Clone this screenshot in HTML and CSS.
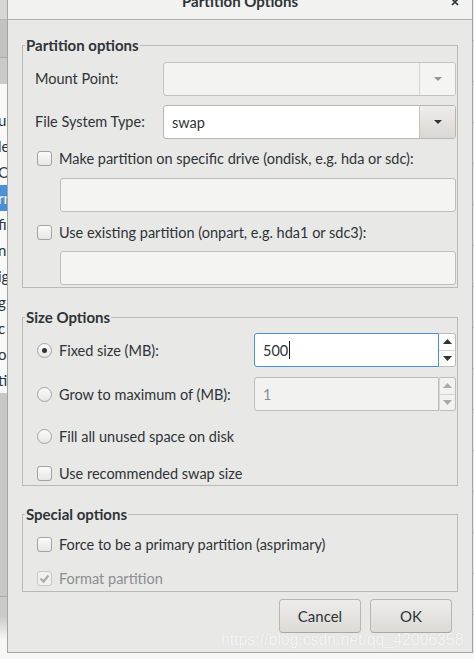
FILE: index.html
```html
<!DOCTYPE html>
<html>
<head>
<meta charset="utf-8">
<title>Partition Options</title>
<link rel="stylesheet" href="styles.css">
</head>
<body>
<div class="screen">
  <div class="bg-left">
    <div class="bl-a"></div>
    <div class="bl-b"></div>
    <div class="bl-c"></div>
    <div class="bl-list">
      <div class="bl-row"><span>ur</span></div>
      <div class="bl-row"><span>le</span></div>
      <div class="bl-row"><span>O</span></div>
      <div class="bl-row sel"><span>rn</span></div>
      <div class="bl-row"><span>fi</span></div>
      <div class="bl-row"><span>n</span></div>
      <div class="bl-row"><span>ig</span></div>
      <div class="bl-row"><span>g</span></div>
      <div class="bl-row"><span>c</span></div>
      <div class="bl-row"><span>or</span></div>
      <div class="bl-row"><span>tic</span></div>
    </div>
    <div class="bl-gray"></div>
    <div class="bl-gray2"></div>
    <div class="bl-fade"></div>
  </div>

  <div class="dialog">
    <div class="titlebar">
      <span class="title">Partition Options</span>
      <svg class="close" width="8" height="8" viewBox="0 0 8 8"><path d="M1 1l6 6M7 1L1 7" stroke="#2e3436" stroke-width="1.7" fill="none"/></svg>
    </div>

    <div class="dbody">
      <fieldset class="frame">
        <legend>Partition options</legend>
        <div class="fc fc1">
          <div class="grid-a">
            <span class="lbl">Mount Point:</span>
            <div class="combo disabled">
              <div class="combo-entry"></div>
              <div class="combo-btn"><svg width="8" height="4" viewBox="0 0 8 4"><path d="M0 0h8L4 4z" fill="#929595"/></svg></div>
            </div>
            <span class="lbl">File System Type:</span>
            <div class="combo">
              <div class="combo-entry">swap</div>
              <div class="combo-btn"><svg width="8" height="4" viewBox="0 0 8 4"><path d="M0 0h8L4 4z" fill="#2e3436"/></svg></div>
            </div>
          </div>
          <div class="check-row r1"><span class="cb"></span><span>Make partition on specific drive (ondisk, e.g. hda or sdc):</span></div>
          <div class="entry indent e1"></div>
          <div class="check-row r2"><span class="cb"></span><span>Use existing partition (onpart, e.g. hda1 or sdc3):</span></div>
          <div class="entry indent e2"></div>
        </div>
      </fieldset>

      <fieldset class="frame f2">
        <legend>Size Options</legend>
        <div class="fc fc2">
          <div class="grid-b">
            <div class="check-row"><span class="rb on"></span><span>Fixed size (MB):</span></div>
            <div class="spin">
              <div class="spin-entry focus">500<span class="caret"></span></div>
              <div class="spin-btns">
                <div class="sb"><svg width="9" height="5" viewBox="0 0 9 5"><path d="M0 5L4.5 0 9 5z" fill="#2e3436"/></svg></div>
                <div class="sb"><svg width="9" height="5" viewBox="0 0 9 5"><path d="M0 0h9L4.5 5z" fill="#2e3436"/></svg></div>
              </div>
            </div>
            <div class="check-row"><span class="rb"></span><span>Grow to maximum of (MB):</span></div>
            <div class="spin disabled">
              <div class="spin-entry">1</div>
              <div class="spin-btns">
                <div class="sb"><svg width="9" height="5" viewBox="0 0 9 5"><path d="M0 5L4.5 0 9 5z" fill="#a9abab"/></svg></div>
                <div class="sb"><svg width="9" height="5" viewBox="0 0 9 5"><path d="M0 0h9L4.5 5z" fill="#a9abab"/></svg></div>
              </div>
            </div>
          </div>
          <div class="check-row r3"><span class="rb"></span><span>Fill all unused space on disk</span></div>
          <div class="check-row r4"><span class="cb"></span><span>Use recommended swap size</span></div>
        </div>
      </fieldset>

      <fieldset class="frame f3">
        <legend>Special options</legend>
        <div class="fc fc3">
          <div class="check-row"><span class="cb"></span><span>Force to be a primary partition (asprimary)</span></div>
          <div class="check-row r5 dis"><span class="cb checked"><svg width="13" height="13" viewBox="0 0 13 13"><path d="M2.5 6.5l3 3 5-6" stroke="#a9abab" stroke-width="2.2" fill="none"/></svg></span><span>Format partition</span></div>
        </div>
      </fieldset>

      <div class="actions">
        <button class="btn">Cancel</button>
        <button class="btn">OK</button>
      </div>
    </div>
  </div>

  <div class="bg-right"></div>

  <div class="watermark">https://blog.csdn.net/qq_42006358</div>
</div>
</body>
</html>
```

FILE: styles.css
```css
html, body {
  margin: 0;
  padding: 0;
}
body {
  width: 474px;
  height: 659px;
  overflow: hidden;
  background: #f7f7f7;
  font-family: Lato, "Noto Sans", sans-serif;
  font-size: 14.5px;
  color: #2e3436;
}
.screen {
  position: relative;
  display: flex;
  align-items: flex-start;
  width: 474px;
  height: 659px;
  overflow: hidden;
}

/* background window, left strip */
.bg-left {
  width: 7px;
  flex: none;
  display: flex;
  flex-direction: column;
  overflow: hidden;
  height: 659px;
}
.bl-a { height: 19px; background: #d6d6d6; border-bottom: 1px solid #b9b9b9; flex: none; }
.bl-b { height: 37px; background: #c3c3c3; border-bottom: 1px solid #adadad; flex: none; }
.bl-c { height: 26px; background: #cacaca; flex: none; }
.bl-list { background: #f8f8f8; padding-top: 23px; flex: none; }
.bl-row {
  height: 26px;
  line-height: 26px;
  white-space: nowrap;
  font-size: 15px;
}
.bl-row span { margin-left: -2px; }
.bl-row.sel { background: #4a90d9; color: #fff; }
.bl-gray { height: 203px; background: #c8c8c8; border-bottom: 1px solid #a9a9a9; flex: none; }
.bl-gray2 { height: 19px; background: #cacaca; flex: none; }
.bl-fade { height: 24px; background: linear-gradient(#cacaca, #f7f7f7); flex: none; }

.bg-right {
  width: 1px;
  flex: none;
  height: 653px;
  background: repeating-linear-gradient(#e6e6e6 0, #e6e6e6 40px, #b8b8b8 40px, #b8b8b8 41px);
}

/* dialog */
.dialog {
  width: 466px;
  flex: none;
  box-sizing: border-box;
  border: 1px solid #a5a5a1;
  border-top: none;
  background: #e8e8e7;
  display: flex;
  flex-direction: column;
}
.titlebar {
  height: 19px;
  border-bottom: 1px solid #b0b0ac;
  background: #f2f2f1;
  display: grid;
  grid-template-columns: 1fr auto 1fr;
  align-items: start;
  flex: none;
}
.title {
  grid-column: 2;
  font-weight: 700;
  font-size: 15px;
  line-height: 18px;
  margin-top: -8px;
}
.close {
  grid-column: 3;
  justify-self: end;
  margin-right: 13px;
  margin-top: -2px;
}
.dbody {
  padding: 16px 14px 19px;
  display: flex;
  flex-direction: column;
}

.frame {
  margin: 0;
  padding: 0;
  border: 1px solid #b9b9b6;
  min-width: 0;
}
.frame legend {
  margin-left: 2px;
  padding: 0 1px;
  font-weight: 700;
  font-size: 15px;
  line-height: 18px;
}
.f2 { margin-top: 20px; }
.f3 { margin-top: 19px; }

.fc { display: flex; flex-direction: column; }
.fc1 { padding: 8px 1px 2px 12px; }
.fc2 { padding: 7px 1px 3px 12px; }
.fc3 { padding: 12px 1px 4px 12px; }

.grid-a {
  display: grid;
  grid-template-columns: 128px 1fr;
  row-gap: 9px;
  align-items: center;
}
.grid-b {
  display: grid;
  grid-template-columns: 219px 1fr;
  row-gap: 10px;
  align-items: center;
}
.lbl { line-height: 18px; }

.check-row {
  display: flex;
  align-items: center;
  height: 18px;
  padding-left: 2px;
  gap: 7px;
  white-space: nowrap;
}
.check-row.r1 { margin-top: 10px; }
.check-row.r2 { margin-top: 11px; }
.check-row.r3 { margin-top: 16px; }
.check-row.r4 { margin-top: 19px; }
.check-row.r5 { margin-top: 16px; }
.check-row.dis { color: #8b8e8f; }

.cb, .rb {
  width: 15px;
  height: 15px;
  box-sizing: border-box;
  border: 1px solid #a3a3a0;
  background: linear-gradient(#fbfbfb, #e6e6e4);
  flex: none;
  display: flex;
  align-items: center;
  justify-content: center;
}
.cb { border-radius: 3px; }
.rb { border-radius: 50%; }
.rb.on::after {
  content: "";
  width: 5px;
  height: 5px;
  border-radius: 50%;
  background: #2e3436;
}
.cb.checked {
  border-color: #c6c6c3;
  background: #f1f1f0;
}

/* combo boxes */
.combo {
  display: flex;
  height: 34px;
  box-sizing: border-box;
  border: 1px solid #b6b6b3;
  border-radius: 3px;
  background: #fff;
  overflow: hidden;
}
.combo-entry {
  flex: 1;
  padding-left: 8px;
  display: flex;
  align-items: center;
}
.combo-btn {
  width: 36px;
  box-sizing: border-box;
  border-left: 1px solid #c4c4c1;
  background: linear-gradient(#eeedeb, #d9d8d5);
  display: flex;
  align-items: center;
  justify-content: center;
}
.combo.disabled {
  background: #f3f3f2;
  border-color: #c2c2bf;
}
.combo.disabled .combo-btn {
  background: #f4f4f3;
  border-left-color: #d3d3d0;
}

/* entries */
.entry {
  height: 34px;
  box-sizing: border-box;
  border: 1px solid #bdbdba;
  border-radius: 3px;
  background: #f4f4f3;
}
.indent { margin-left: 25px; }
.e1 { margin-top: 11px; }
.e2 { margin-top: 10px; }

/* spin buttons */
.spin {
  display: flex;
  height: 34px;
}
.spin-entry {
  flex: 1;
  box-sizing: border-box;
  border: 1px solid #bdbdba;
  border-radius: 3px 0 0 3px;
  background: #f2f2f1;
  padding-left: 8px;
  display: flex;
  align-items: center;
}
.spin-entry.focus {
  border-color: #4a90d9;
  background: #fff;
}
.spin.disabled .spin-entry { color: #8b8e8f; }
.caret {
  display: inline-block;
  width: 1px;
  height: 18px;
  background: #1b1b1b;
  margin-left: 1px;
}
.spin-btns {
  width: 17px;
  box-sizing: border-box;
  border: 1px solid #bdbdba;
  border-left: none;
  border-radius: 0 3px 3px 0;
  background: #fff;
  display: flex;
  flex-direction: column;
}
.spin.disabled .spin-btns {
  background: #f2f2f1;
  border-left: 1px solid #d6d6d3;
}
.sb {
  flex: 1;
  display: flex;
  align-items: center;
  justify-content: center;
}
.sb + .sb { border-top: 1px solid #d6d6d3; }

/* action buttons */
.actions {
  margin-top: 7px;
  display: flex;
  justify-content: flex-end;
  gap: 9px;
  padding-right: 6px;
}
.btn {
  width: 82px;
  height: 34px;
  box-sizing: border-box;
  border: 1px solid #b6b6b3;
  border-bottom-color: #a7a7a4;
  border-radius: 4px;
  background: linear-gradient(#edecea, #dcdbd8);
  font-family: inherit;
  font-size: 15px;
  color: #2e3436;
  padding: 0;
}

.watermark {
  position: absolute;
  left: 221px;
  top: 631px;
  font-family: "Liberation Sans", Arial, sans-serif;
  font-size: 15.8px;
  line-height: 18px;
  color: rgba(255, 255, 255, 0.8);
  text-shadow: 0 0 1px rgba(0, 0, 0, 0.12);
  white-space: nowrap;
}
```
